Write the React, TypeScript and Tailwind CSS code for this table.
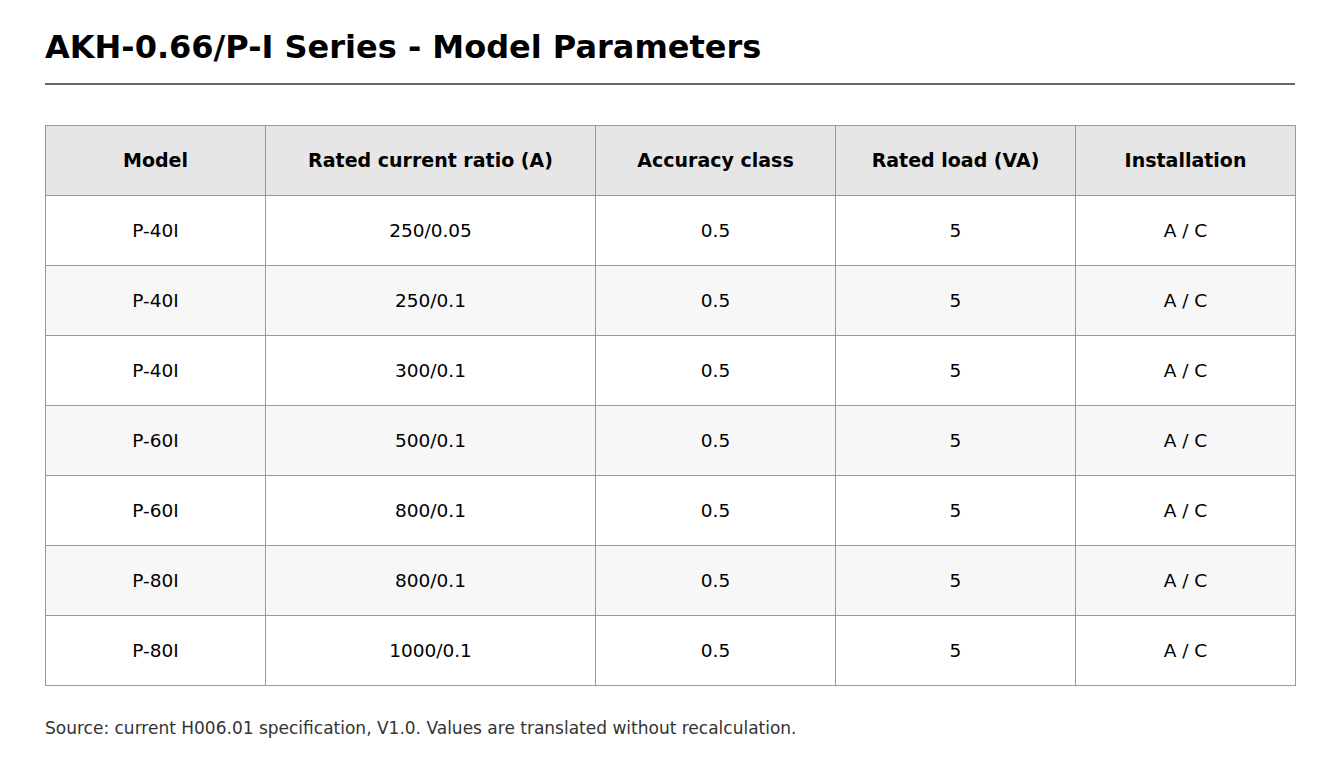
const headers = [
  "Model",
  "Rated current ratio (A)",
  "Accuracy class",
  "Rated load (VA)",
  "Installation",
];

const rows = [
  ["P-40I", "250/0.05"],
  ["P-40I", "250/0.1"],
  ["P-40I", "300/0.1"],
  ["P-60I", "500/0.1"],
  ["P-60I", "800/0.1"],
  ["P-80I", "800/0.1"],
  ["P-80I", "1000/0.1"],
];

export default function App() {
  return (
    <div className="min-h-screen bg-white px-[45px] pt-[28px] font-['DejaVu_Sans',sans-serif] text-black">
      <h1 className="text-[32px] font-bold leading-[38px]">
        AKH-0.66/P-I Series - Model Parameters
      </h1>
      <div className="mt-[17px] h-[2px] bg-[#666666]" />

      <table className="mt-[40px] w-[1250px] table-fixed border-collapse">
        <colgroup>
          <col className="w-[220px]" />
          <col className="w-[330px]" />
          <col className="w-[240px]" />
          <col className="w-[240px]" />
          <col className="w-[220px]" />
        </colgroup>
        <thead>
          <tr className="h-[70px] bg-[#e6e6e6]">
            {headers.map((h) => (
              <th
                key={h}
                className="border border-[#999999] p-0 text-center text-[19px] font-bold"
              >
                {h}
              </th>
            ))}
          </tr>
        </thead>
        <tbody>
          {rows.map(([model, ratio], i) => (
            <tr
              key={i}
              className={`h-[70px] ${i % 2 === 1 ? "bg-[#f7f7f7]" : "bg-white"}`}
            >
              {[model, ratio, "0.5", "5", "A / C"].map((v, j) => (
                <td
                  key={j}
                  className="border border-[#999999] p-0 text-center text-[18.5px]"
                >
                  {v}
                </td>
              ))}
            </tr>
          ))}
        </tbody>
      </table>

      <p className="mt-[30px] text-[17px] text-[#333333]">
        Source: current H006.01 specification, V1.0. Values are translated
        without recalculation.
      </p>
    </div>
  );
}
